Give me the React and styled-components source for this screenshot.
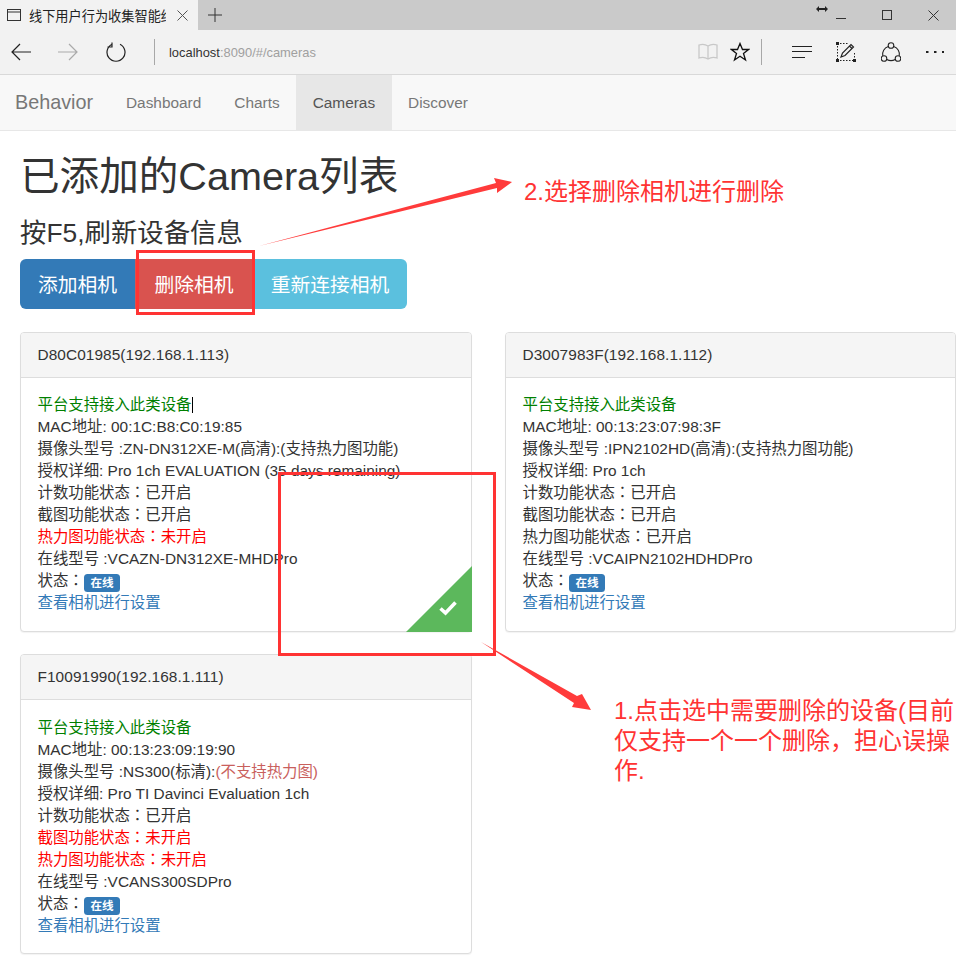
import React from 'react';
import styled, { createGlobalStyle } from 'styled-components';

const GlobalStyle = createGlobalStyle`
  html, body {
    margin: 0;
    padding: 0;
    background: #fff;
  }
  body {
    font-family: "Liberation Sans", "Noto Sans CJK SC", sans-serif;
    font-size: 15.4px;
    color: #333;
  }
`;

const Page = styled.div`
  position: relative;
  width: 956px;
  height: 977px;
  overflow: hidden;
  background: #fff;
`;

const TabStrip = styled.div`
  display: flex;
  align-items: stretch;
  height: 30px;
  background: #cacaca;
`;

const Tab = styled.div`
  display: flex;
  align-items: center;
  width: 198px;
  padding-left: 7px;
  box-sizing: border-box;
  background: #f2f2f2;
  font-size: 13.2px;
  color: #222;
`;

const TabTitle = styled.span`
  width: 137px;
  margin-left: 8px;
  overflow: hidden;
  white-space: nowrap;
`;

const TabClose = styled.svg`
  margin-left: 11px;
`;

const NewTab = styled.svg`
  margin: 8px 0 0 10px;
`;

const WindowButtons = styled.div`
  display: flex;
  align-items: center;
  margin-left: auto;
`;

const WindowButton = styled.div`
  display: flex;
  align-items: center;
  justify-content: center;
  width: 46px;
  height: 28px;
`;

const ResizeCursor = styled.svg`
  margin-right: -10px;
  margin-top: -12px;
`;

const Toolbar = styled.div`
  display: flex;
  align-items: center;
  height: 44px;
  background: #f2f2f2;
  border-bottom: 1px solid #d9d9d9;
`;

const ToolIcon = styled.svg`
  flex: none;
  margin-left: ${({ $gap }) => $gap}px;
`;

const Divider = styled.div`
  flex: none;
  width: 1px;
  height: 26px;
  margin-left: ${({ $gap }) => $gap}px;
  background: #a8a8a8;
`;

const Address = styled.div`
  margin-left: 14px;
  width: 529px;
  font-size: 12.9px;
  color: #a0a0a0;
  span {
    color: #333;
  }
`;

const Navbar = styled.nav`
  display: flex;
  align-items: stretch;
  height: 55px;
  padding-left: 15px;
  background: #f8f8f8;
  border-bottom: 1px solid #e7e7e7;
`;

const Brand = styled.div`
  align-self: center;
  width: 94.5px;
  font-size: 19.8px;
  color: #777;
`;

const NavLink = styled.div`
  display: flex;
  align-items: center;
  padding: 0 16.5px;
  color: ${({ $active }) => ($active ? '#555' : '#777')};
  background: ${({ $active }) => ($active ? '#e7e7e7' : 'transparent')};
`;

const Content = styled.main`
  padding-left: 20px;
`;

const Title = styled.h1`
  margin: 21px 0 0;
  font-size: 39.6px;
  font-weight: 400;
  line-height: 48px;
  color: #333;
`;

const Subtitle = styled.h3`
  margin: 18px 0 0;
  font-size: 26.4px;
  font-weight: 400;
  line-height: 30px;
  color: #333;
`;

const ButtonGroup = styled.div`
  display: flex;
  margin-top: 11px;
`;

const Button = styled.div`
  display: flex;
  align-items: center;
  justify-content: center;
  box-sizing: border-box;
  width: ${({ $width }) => $width}px;
  height: 50px;
  padding-bottom: 2px;
  font-size: 19.8px;
  color: #fff;
  background: ${({ $color }) => $color};
  border-radius: ${({ $radius }) => $radius};
`;

const CardGrid = styled.div`
  display: grid;
  grid-template-columns: 452px 451px;
  column-gap: 33px;
  row-gap: 22px;
  margin-top: 23px;
`;

const Card = styled.section`
  position: relative;
  box-sizing: border-box;
  height: 300px;
  background: #fff;
  border: 1px solid #ddd;
  border-radius: 4px;
  box-shadow: 0 1px 1px rgba(0, 0, 0, 0.05);
`;

const CardHeader = styled.div`
  box-sizing: border-box;
  height: 45px;
  padding: 0 16.5px;
  line-height: 44px;
  letter-spacing: 0.08px;
  background: #f5f5f5;
  border-bottom: 1px solid #ddd;
  border-radius: 3px 3px 0 0;
  color: #333;
`;

const CardBody = styled.div`
  padding: ${({ $top }) => $top}px 16.5px 0;
`;

const Line = styled.div`
  height: 22px;
  line-height: 22px;
  white-space: nowrap;
  color: ${({ $color }) => $color || '#333'};
`;

// the reference's full-width colon sits centred in its cell, as in the TC face
const Colon = styled.span`
  font-family: "Noto Sans CJK TC", sans-serif;
  line-height: 0;
`;

const Muted = styled.span`
  color: #c9605c;
`;

const Caret = styled.span`
  display: inline-block;
  width: 1px;
  height: 16px;
  margin-left: 1px;
  vertical-align: -3px;
  background: #000;
`;

const Badge = styled.span`
  display: inline-block;
  padding: 0 6.8px;
  height: 18px;
  line-height: 18px;
  font-size: 11.55px;
  font-weight: 700;
  color: #fff;
  background: #337ab7;
  border-radius: 3.5px;
  vertical-align: -1px;
`;

const CardLink = styled.span`
  color: #337ab7;
`;

const SelectedMark = styled.div`
  position: absolute;
  right: -1px;
  bottom: -1px;
  width: 66px;
  height: 66px;
  background: #5cb85c;
  clip-path: polygon(100% 0, 100% 100%, 0 100%);
`;

const CheckIcon = styled.svg`
  position: absolute;
  right: 15px;
  bottom: 16px;
`;

const Highlight = styled.div`
  position: absolute;
  box-sizing: border-box;
  left: ${({ $x }) => $x}px;
  top: ${({ $y }) => $y}px;
  width: ${({ $w }) => $w}px;
  height: ${({ $h }) => $h}px;
  border: 3px solid #ff3333;
`;

const Arrow = styled.svg`
  position: absolute;
  left: 0;
  top: 0;
  pointer-events: none;
`;

const Note = styled.div`
  position: absolute;
  left: ${({ $x }) => $x}px;
  top: ${({ $y }) => $y}px;
  width: ${({ $w }) => $w}px;
  font-size: 24px;
  line-height: 30px;
  color: #ff3333;
`;

const cards = [
  {
    id: 'D80C01985(192.168.1.113)',
    selected: true,
    top: 16,
    lines: [
      ['MAC地址: 00:1C:B8:C0:19:85'],
      ['摄像头型号 :ZN-DN312XE-M(高清):(支持热力图功能)'],
      ['授权详细: Pro 1ch EVALUATION (35 days remaining)'],
      ['计数功能状态：已开启'],
      ['截图功能状态：已开启'],
      ['热力图功能状态：未开启', 'red'],
      ['在线型号 :VCAZN-DN312XE-MHDPro'],
    ],
  },
  {
    id: 'D3007983F(192.168.1.112)',
    top: 16,
    lines: [
      ['MAC地址: 00:13:23:07:98:3F'],
      ['摄像头型号 :IPN2102HD(高清):(支持热力图功能)'],
      ['授权详细: Pro 1ch'],
      ['计数功能状态：已开启'],
      ['截图功能状态：已开启'],
      ['热力图功能状态：已开启'],
      ['在线型号 :VCAIPN2102HDHDPro'],
    ],
  },
  {
    id: 'F10091990(192.168.1.111)',
    top: 17,
    lines: [
      ['MAC地址: 00:13:23:09:19:90'],
      ['摄像头型号 :NS300(标清):', null, '(不支持热力图)'],
      ['授权详细: Pro TI Davinci Evaluation 1ch'],
      ['计数功能状态：已开启'],
      ['截图功能状态：未开启', 'red'],
      ['热力图功能状态：未开启', 'red'],
      ['在线型号 :VCANS300SDPro'],
    ],
  },
];

function withColon(text) {
  const [before, after] = text.split('：');
  if (after === undefined) return text;
  return (
    <>
      {before}
      <Colon>：</Colon>
      {after}
    </>
  );
}

function CameraCard({ card, withCaret }) {
  return (
    <Card>
      <CardHeader>{card.id}</CardHeader>
      <CardBody $top={card.top}>
        <Line $color="green">
          平台支持接入此类设备
          {withCaret && <Caret />}
        </Line>
        {card.lines.map(([text, color, muted]) => (
          <Line key={text} $color={color}>
            {withColon(text)}
            {muted && <Muted>{muted}</Muted>}
          </Line>
        ))}
        <Line>
          状态<Colon>：</Colon>
          <Badge>在线</Badge>
        </Line>
        <Line>
          <CardLink>查看相机进行设置</CardLink>
        </Line>
      </CardBody>
      {card.selected && (
        <SelectedMark>
          <CheckIcon width="18" height="16" viewBox="0 0 18 16">
            <path d="M1.5 8.5 L6.5 13 L16.5 2.5" fill="none" stroke="#fff" strokeWidth="3.6" />
          </CheckIcon>
        </SelectedMark>
      )}
    </Card>
  );
}

export default function App() {
  return (
    <Page>
      <GlobalStyle />
      <TabStrip>
        <Tab>
          <svg width="14" height="12" viewBox="0 0 14 12">
            <rect x="0.5" y="0.5" width="13" height="11" fill="none" stroke="#333" />
            <path d="M1 3h12" stroke="#333" />
          </svg>
          <TabTitle>线下用户行为收集智能终端</TabTitle>
          <TabClose width="11" height="11" viewBox="0 0 11 11">
            <path d="M0.5 0.5l10 10M10.5 0.5l-10 10" stroke="#555" />
          </TabClose>
        </Tab>
        <NewTab width="14" height="14" viewBox="0 0 14 14">
          <path d="M7 0v14M0 7h14" stroke="#333" />
        </NewTab>
        <WindowButtons>
          <ResizeCursor width="12" height="8" viewBox="0 0 12 8">
            <path d="M0 4l3-3v2h6V1l3 3-3 3V5H3v2z" fill="#222" />
          </ResizeCursor>
          <WindowButton>
            <svg width="11" height="11" viewBox="0 0 11 11">
              <path d="M0 8.5h10" stroke="#333" />
            </svg>
          </WindowButton>
          <WindowButton>
            <svg width="11" height="11" viewBox="0 0 11 11">
              <rect x="0.5" y="0.5" width="9" height="9" fill="none" stroke="#333" />
            </svg>
          </WindowButton>
          <WindowButton>
            <svg width="11" height="11" viewBox="0 0 11 11">
              <path d="M0.5 0.5l10 10M10.5 0.5l-10 10" stroke="#333" />
            </svg>
          </WindowButton>
        </WindowButtons>
      </TabStrip>

      <Toolbar>
        <ToolIcon $gap={11} width="20" height="18" viewBox="0 0 20 18">
          <path d="M20 9H1M9 1L1 9l8 8" fill="none" stroke="#222" strokeWidth="1.2" />
        </ToolIcon>
        <ToolIcon $gap={27} width="20" height="18" viewBox="0 0 20 18">
          <path d="M0 9h19M11 1l8 8-8 8" fill="none" stroke="#aaa" strokeWidth="1.2" />
        </ToolIcon>
        <ToolIcon $gap={28} width="20" height="20" viewBox="0 0 20 20">
          <path d="M6 2.2a9 9 0 1 0 8 0M6 0.5v4.5h-4.5" fill="none" stroke="#222" strokeWidth="1.2" />
        </ToolIcon>
        <Divider $gap={28} />
        <Address>
          <span>localhost</span>:8090/#/cameras
        </Address>
        <ToolIcon $gap={0} width="20" height="18" viewBox="0 0 20 18">
          <path d="M10 3C7 1 4 1 1 2v13c3-1 6-1 9 1 3-2 6-2 9-1V2c-3-1-6-1-9 1zM10 3v13" fill="none" stroke="#c8c8c8" strokeWidth="1.3" />
        </ToolIcon>
        <ToolIcon $gap={12} width="20" height="20" viewBox="0 0 20 20">
          <path d="M10 1.5l2.5 6h6l-5 4 2 6.5-5.5-3.8L4.5 18l2-6.5-5-4h6z" fill="none" stroke="#111" strokeWidth="1.3" />
        </ToolIcon>
        <Divider $gap={11} />
        <ToolIcon $gap={30} width="20" height="14" viewBox="0 0 20 14">
          <path d="M0 1.5h20M0 6.5h20M0 12.5h13" stroke="#222" strokeWidth="1.2" />
        </ToolIcon>
        <ToolIcon $gap={24} width="20" height="20" viewBox="0 0 20 20">
          <path d="M4 1.5h9M1.5 4v13M18.5 11v6M4 18.5h13" stroke="#222" strokeDasharray="1.5 1.5" />
          <rect x="0" y="0" width="3" height="3" fill="#222" />
          <rect x="0" y="17" width="3" height="3" fill="#222" />
          <rect x="17" y="17" width="3" height="3" fill="#222" />
          <path d="M5 15l1.5-4L15 2.5l2.5 2.5L9 13.5zM13.5 4l2.5 2.5" fill="none" stroke="#222" strokeWidth="1.2" />
        </ToolIcon>
        <ToolIcon $gap={25} width="20" height="21" viewBox="0 0 20 21">
          <circle cx="10" cy="3.5" r="2.8" fill="none" stroke="#222" strokeWidth="1.1" />
          <circle cx="3" cy="16.5" r="2.8" fill="none" stroke="#222" strokeWidth="1.1" />
          <circle cx="17" cy="16.5" r="2.8" fill="none" stroke="#222" strokeWidth="1.1" />
          <path d="M7.3 4.5A8 8 0 0 0 1.8 14M12.7 4.5A8 8 0 0 1 18.2 14M5.8 17.5a9 9 0 0 0 8.4 0" fill="none" stroke="#222" strokeWidth="1.1" />
        </ToolIcon>
        <ToolIcon $gap={25} width="18" height="4" viewBox="0 0 18 4">
          <path d="M0 1h2.5v2H0zM8 1h2.5v2H8zM16 1h2v2h-2z" fill="#222" />
        </ToolIcon>
      </Toolbar>

      <Navbar>
        <Brand>Behavior</Brand>
        <NavLink>Dashboard</NavLink>
        <NavLink>Charts</NavLink>
        <NavLink $active>Cameras</NavLink>
        <NavLink>Discover</NavLink>
      </Navbar>

      <Content>
        <Title>已添加的Camera列表</Title>
        <Subtitle>按F5,刷新设备信息</Subtitle>
        <ButtonGroup>
          <Button $width={115} $color="#337ab7" $radius="6px 0 0 6px">添加相机</Button>
          <Button $width={118} $color="#d9534f" $radius="0">删除相机</Button>
          <Button $width={154} $color="#5bc0de" $radius="0 6px 6px 0">重新连接相机</Button>
        </ButtonGroup>
        <CardGrid>
          {cards.map((card, i) => (
            <CameraCard key={card.id} card={card} withCaret={i === 0} />
          ))}
        </CardGrid>
      </Content>

      <Highlight $x={136} $y={250} $w={119} $h={65} />
      <Highlight $x={278} $y={472} $w={218} $h={184} />
      <Arrow width="956" height="977" viewBox="0 0 956 977">
        <path d="M259 246 L496 183 L494 178 L512 182 L497 193 L497 188 Z" fill="#ff3b3b" />
        <path d="M481 642 L577 696 L582 694 L591 710 L572 707 L574 703 Z" fill="#ff3b3b" />
      </Arrow>
      <Note $x={524} $y={177} $w={300}>2.选择删除相机进行删除</Note>
      <Note $x={614} $y={696} $w={342}>1.点击选中需要删除的设备(目前仅支持一个一个删除，担心误操作.</Note>
    </Page>
  );
}
